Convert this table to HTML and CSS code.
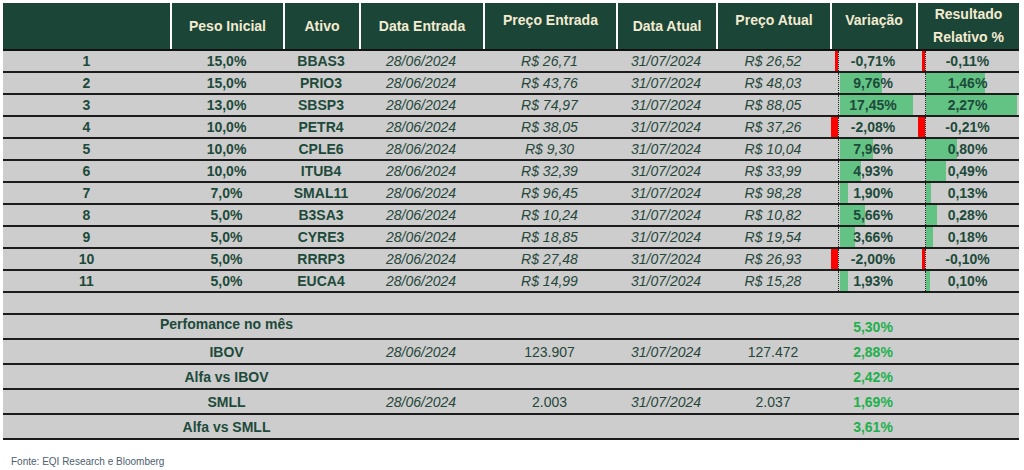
FILE: index.html
```html
<!DOCTYPE html>
<html lang="pt-BR">
<head>
<meta charset="utf-8">
<title>Carteira</title>
<link rel="stylesheet" href="styles.css">
</head>
<body>
<div class="table">
  <div class="row head">
    <div class="c"></div>
    <div class="c">Peso Inicial</div>
    <div class="c">Ativo</div>
    <div class="c">Data Entrada</div>
    <div class="c up">Preço Entrada</div>
    <div class="c">Data Atual</div>
    <div class="c up">Preço Atual</div>
    <div class="c up">Variação</div>
    <div class="c two">Resultado<br>Relativo %</div>
  </div>

  <div class="row">
    <div class="c b">1</div><div class="c b">15,0%</div><div class="c b">BBAS3</div>
    <div class="c i">28/06/2024</div><div class="c i">R$ 26,71</div><div class="c i">31/07/2024</div><div class="c i">R$ 26,52</div>
    <div class="c b axv"><span class="bar neg" style="width:3px"></span><span class="t">-0,71%</span></div>
    <div class="c b axr"><span class="bar neg" style="width:3px"></span><span class="t">-0,11%</span></div>
  </div>
  <div class="row">
    <div class="c b">2</div><div class="c b">15,0%</div><div class="c b">PRIO3</div>
    <div class="c i">28/06/2024</div><div class="c i">R$ 43,76</div><div class="c i">31/07/2024</div><div class="c i">R$ 48,03</div>
    <div class="c b axv"><span class="bar pos" style="width:42px"></span><span class="t">9,76%</span></div>
    <div class="c b axr"><span class="bar pos" style="width:59px"></span><span class="t">1,46%</span></div>
  </div>
  <div class="row">
    <div class="c b">3</div><div class="c b">13,0%</div><div class="c b">SBSP3</div>
    <div class="c i">28/06/2024</div><div class="c i">R$ 74,97</div><div class="c i">31/07/2024</div><div class="c i">R$ 88,05</div>
    <div class="c b axv"><span class="bar pos" style="width:73px"></span><span class="t">17,45%</span></div>
    <div class="c b axr"><span class="bar pos" style="width:91px"></span><span class="t">2,27%</span></div>
  </div>
  <div class="row">
    <div class="c b">4</div><div class="c b">10,0%</div><div class="c b">PETR4</div>
    <div class="c i">28/06/2024</div><div class="c i">R$ 38,05</div><div class="c i">31/07/2024</div><div class="c i">R$ 37,26</div>
    <div class="c b axv"><span class="bar neg" style="width:7px"></span><span class="t">-2,08%</span></div>
    <div class="c b axr"><span class="bar neg" style="width:7px"></span><span class="t">-0,21%</span></div>
  </div>
  <div class="row">
    <div class="c b">5</div><div class="c b">10,0%</div><div class="c b">CPLE6</div>
    <div class="c i">28/06/2024</div><div class="c i">R$ 9,30</div><div class="c i">31/07/2024</div><div class="c i">R$ 10,04</div>
    <div class="c b axv"><span class="bar pos" style="width:33px"></span><span class="t">7,96%</span></div>
    <div class="c b axr"><span class="bar pos" style="width:31px"></span><span class="t">0,80%</span></div>
  </div>
  <div class="row">
    <div class="c b">6</div><div class="c b">10,0%</div><div class="c b">ITUB4</div>
    <div class="c i">28/06/2024</div><div class="c i">R$ 32,39</div><div class="c i">31/07/2024</div><div class="c i">R$ 33,99</div>
    <div class="c b axv"><span class="bar pos" style="width:21px"></span><span class="t">4,93%</span></div>
    <div class="c b axr"><span class="bar pos" style="width:20px"></span><span class="t">0,49%</span></div>
  </div>
  <div class="row">
    <div class="c b">7</div><div class="c b">7,0%</div><div class="c b">SMAL11</div>
    <div class="c i">28/06/2024</div><div class="c i">R$ 96,45</div><div class="c i">31/07/2024</div><div class="c i">R$ 98,28</div>
    <div class="c b axv"><span class="bar pos" style="width:8px"></span><span class="t">1,90%</span></div>
    <div class="c b axr"><span class="bar pos" style="width:5px"></span><span class="t">0,13%</span></div>
  </div>
  <div class="row">
    <div class="c b">8</div><div class="c b">5,0%</div><div class="c b">B3SA3</div>
    <div class="c i">28/06/2024</div><div class="c i">R$ 10,24</div><div class="c i">31/07/2024</div><div class="c i">R$ 10,82</div>
    <div class="c b axv"><span class="bar pos" style="width:25px"></span><span class="t">5,66%</span></div>
    <div class="c b axr"><span class="bar pos" style="width:11px"></span><span class="t">0,28%</span></div>
  </div>
  <div class="row">
    <div class="c b">9</div><div class="c b">5,0%</div><div class="c b">CYRE3</div>
    <div class="c i">28/06/2024</div><div class="c i">R$ 18,85</div><div class="c i">31/07/2024</div><div class="c i">R$ 19,54</div>
    <div class="c b axv"><span class="bar pos" style="width:15px"></span><span class="t">3,66%</span></div>
    <div class="c b axr"><span class="bar pos" style="width:7px"></span><span class="t">0,18%</span></div>
  </div>
  <div class="row">
    <div class="c b">10</div><div class="c b">5,0%</div><div class="c b">RRRP3</div>
    <div class="c i">28/06/2024</div><div class="c i">R$ 27,48</div><div class="c i">31/07/2024</div><div class="c i">R$ 26,93</div>
    <div class="c b axv"><span class="bar neg" style="width:7px"></span><span class="t">-2,00%</span></div>
    <div class="c b axr"><span class="bar neg" style="width:3px"></span><span class="t">-0,10%</span></div>
  </div>
  <div class="row">
    <div class="c b">11</div><div class="c b">5,0%</div><div class="c b">EUCA4</div>
    <div class="c i">28/06/2024</div><div class="c i">R$ 14,99</div><div class="c i">31/07/2024</div><div class="c i">R$ 15,28</div>
    <div class="c b axv"><span class="bar pos" style="width:8px"></span><span class="t">1,93%</span></div>
    <div class="c b axr"><span class="bar pos" style="width:4px"></span><span class="t">0,10%</span></div>
  </div>

  <div class="row"></div>

  <div class="row sum">
    <div class="c"></div><div class="c b raise">Perfomance no mês</div><div class="c"></div>
    <div class="c"></div><div class="c"></div><div class="c"></div><div class="c"></div>
    <div class="c b g">5,30%</div><div class="c"></div>
  </div>
  <div class="row sum">
    <div class="c"></div><div class="c b">IBOV</div><div class="c"></div>
    <div class="c i">28/06/2024</div><div class="c r">123.907</div><div class="c i">31/07/2024</div><div class="c r">127.472</div>
    <div class="c b g">2,88%</div><div class="c"></div>
  </div>
  <div class="row sum">
    <div class="c"></div><div class="c b">Alfa vs IBOV</div><div class="c"></div>
    <div class="c"></div><div class="c"></div><div class="c"></div><div class="c"></div>
    <div class="c b g">2,42%</div><div class="c"></div>
  </div>
  <div class="row sum">
    <div class="c"></div><div class="c b">SMLL</div><div class="c"></div>
    <div class="c i">28/06/2024</div><div class="c r">2.003</div><div class="c i">31/07/2024</div><div class="c r">2.037</div>
    <div class="c b g">1,69%</div><div class="c"></div>
  </div>
  <div class="row sum">
    <div class="c"></div><div class="c b">Alfa vs SMLL</div><div class="c"></div>
    <div class="c"></div><div class="c"></div><div class="c"></div><div class="c"></div>
    <div class="c b g">3,61%</div><div class="c"></div>
  </div>
</div>
<p class="source">Fonte: EQI Research e Bloomberg</p>
</body>
</html>
```

FILE: styles.css
```css
html, body {
  margin: 0;
  padding: 0;
  background: #ffffff;
}
body {
  padding: 3px 0 0 3px;
  font-family: "Liberation Sans", Arial, sans-serif;
  font-size: 14px;
  color: #1d4a3a;
}
.table {
  width: 1016px;
}
.row {
  display: grid;
  grid-template-columns: 167px 113px 76px 124px 133px 100px 114px 86px 103px;
  height: 22px;
  box-sizing: border-box;
  background: #cdcdcd;
  border-bottom: 2px solid #1c1c1c;
}
.row.sum {
  height: 25px;
}
.row.head {
  height: 48px;
  background: #1b4536;
  color: #f3ebd2;
  font-weight: bold;
  font-size: 14px;
  border-bottom: 2px solid #121212;
}
.head .c + .c {
  border-left: 2px solid #ffffff;
}
.head .up {
  padding-bottom: 12px;
}
.head .two {
  line-height: 23px;
  text-align: center;
}
.c {
  display: flex;
  align-items: center;
  justify-content: center;
  white-space: nowrap;
  position: relative;
  min-width: 0;
}
.b {
  font-weight: bold;
  color: #1d4a3a;
}
.raise {
  padding-bottom: 5px;
}
.i {
  font-style: italic;
  color: #26463a;
}
.r {
  color: #26463a;
}
.g {
  color: #22b04c;
}
.t {
  position: relative;
  z-index: 1;
}
.axv::before,
.axr::before {
  content: "";
  position: absolute;
  top: 0;
  bottom: 0;
  border-left: 1px dotted #222222;
  z-index: 2;
}
.axv::before { left: 8px; }
.axr::before { left: 9px; }
.bar {
  position: absolute;
  top: 0;
  bottom: 0;
}
.bar.pos {
  background: #63c384;
}
.axv .bar.pos { left: 10px; }
.axr .bar.pos { left: 10px; }
.bar.neg {
  background: #ff0000;
}
.axv .bar.neg { right: 78px; }
.axr .bar.neg { right: 94px; }
.source {
  margin: 16px 0 0 8px;
  font-size: 10px;
  line-height: 12px;
  color: #4d6072;
}
```
